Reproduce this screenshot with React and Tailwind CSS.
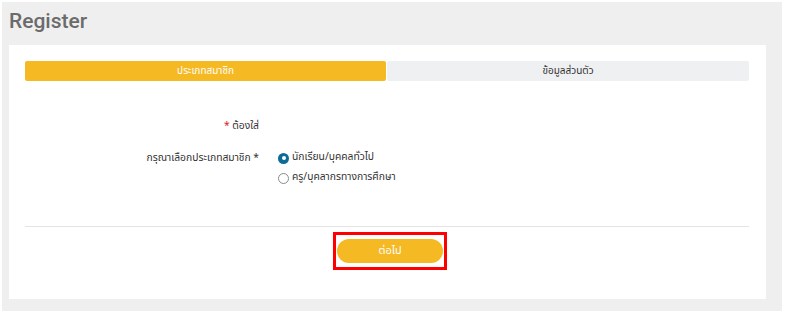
import { useState } from 'react'

const thai = { fontFamily: '"Noto Sans Thai", "Noto Sans Thai UI", Kanit, "Noto Sans", "DejaVu Sans", sans-serif' }

function Radio({ checked, label, onClick }) {
  return (
    <label onClick={onClick} className="flex items-center gap-[3px] h-[20px] cursor-pointer">
      {checked ? (
        <span className="w-[11px] h-[11px] rounded-full bg-[#0c6b97] flex items-center justify-center">
          <span className="w-[4px] h-[4px] rounded-full bg-white" />
        </span>
      ) : (
        <span className="w-[11px] h-[11px] rounded-full border border-[#8a8a8a] bg-white" />
      )}
      <span className="text-[10.3px] text-[#333]">{label}</span>
    </label>
  )
}

export default function App() {
  const [type, setType] = useState('student')

  return (
    <div className="w-[786px] h-[313px] bg-white pt-[2px] pl-[2px] pr-[4px] overflow-hidden" style={thai}>
      <div className="h-[309px] bg-[#efefef] px-[7px]">
        {/* Title */}
        <div className="h-[43px] pt-[5px]">
          <h1 className="text-[21px] leading-[28px] font-medium text-[#6b6b6b]" style={{ fontFamily: 'Roboto, "Noto Sans", sans-serif' }}>Register</h1>
        </div>

        {/* Card */}
        <div className="w-[757px] h-[254px] bg-white pt-[16px] pl-[16px] pr-[17px]">
          <div className="flex gap-[1px] h-[20px]">
            <div className="w-[361px] bg-[#f5b924] rounded-[2px] flex items-center justify-center text-[10px] text-white">ประเภทสมาชิก</div>
            <div className="flex-1 bg-[#eff0f2] rounded-[2px] flex items-center justify-center text-[10px] text-[#333]">ข้อมูลส่วนตัว</div>
          </div>

          <div className="mt-[35px] grid grid-cols-[234px_1fr] gap-x-[19px]">
            <div className="text-right text-[10.3px] text-[#333] h-[20px] leading-[20px]">
              <span className="text-[#e0202a]">*</span> ต้องใส่
            </div>
            <div />
            <div className="mt-[12px] text-right text-[10.3px] text-[#333] leading-[20px]">กรุณาเลือกประเภทสมาชิก *</div>
            <div className="mt-[12px] flex flex-col">
              <Radio checked={type === 'student'} label="นักเรียน/บุคคลทั่วไป" onClick={() => setType('student')} />
              <Radio checked={type === 'teacher'} label="ครู/บุคลากรทางการศึกษา" onClick={() => setType('teacher')} />
            </div>
          </div>

          <div className="mt-[38px] border-t border-[#e3e3e3]" />

          <div className="mt-[5px] flex justify-center pl-[6px]">
            <div className="border-[3px] border-[#ff0000] px-[1px] py-[4px]">
              <button className="block w-[106px] h-[24px] rounded-full bg-[#f5b924] text-white text-[11px]">ต่อไป</button>
            </div>
          </div>
        </div>
      </div>
    </div>
  )
}
